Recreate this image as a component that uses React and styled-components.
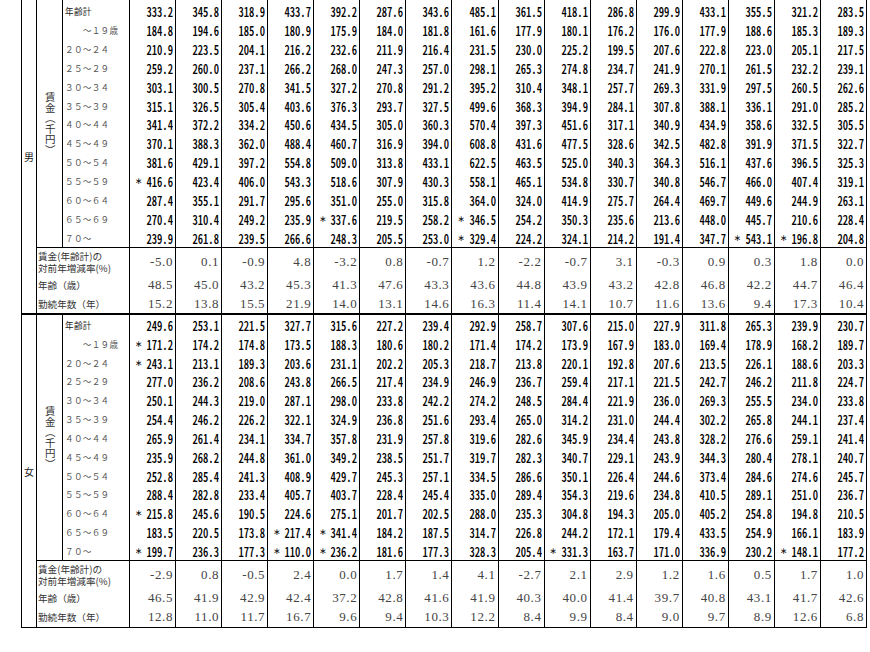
import React from 'react';
import styled, { createGlobalStyle } from 'styled-components';

const GlobalStyle = createGlobalStyle`
  html, body { margin: 0; padding: 0; background: #fff; }
  body { font-family: "Noto Sans CJK JP", sans-serif; color: #000; }
  * { box-sizing: border-box; }
`;

const Page = styled.div`
  width: 870px;
  height: 652px;
  overflow: hidden;
  padding-left: 21px;
`;

const Table = styled.div`
  width: 846px;
  border-right: 1px solid #000;
  border-bottom: 1px solid #000;
`;

const Section = styled.section`
  display: grid;
  grid-template-columns: 15px 26px 67px repeat(16, minmax(0, 1fr));
  grid-template-rows: ${(p) => (p.$stub ? '2px ' : '')}repeat(13, 18.85px) 28.5px 19px 19px;
  border-top: ${(p) => (p.$divided ? '2px solid #000' : '0')};
`;

const StubCell = styled.div`
  border-left: 1px solid #000;
  grid-column: ${(p) => p.$col || 'auto'};
`;

const SexCell = styled.div`
  grid-column: 1;
  grid-row: 1 / -1;
  border-left: 1px solid #000;
  display: flex;
  align-items: center;
  justify-content: center;
  font-size: 10px;
  color: #222;
`;

const WageHead = styled.div`
  grid-column: 2;
  grid-row: ${(p) => p.$rows};
  border-left: 1px solid #000;
  display: flex;
  align-items: center;
  justify-content: center;
`;

const VerticalText = styled.span`
  writing-mode: vertical-rl;
  font-size: 10.5px;
  line-height: 1;
  color: #333;
`;

const AgeLabel = styled.div`
  grid-column: 3;
  border-left: 1px solid #000;
  display: flex;
  align-items: center;
  padding-left: 2px;
  font-size: 8.6px;
  letter-spacing: 0.3px;
  color: ${(p) => (p.$strong ? '#222' : '#555')};
  white-space: pre;
`;

const StatLabel = styled.div`
  grid-column: 2 / 4;
  border-left: 1px solid #000;
  border-top: ${(p) => (p.$ruled ? '1px solid #000' : '0')};
  display: flex;
  align-items: center;
  padding-left: 1px;
  font-size: 9.6px;
  line-height: 12px;
  color: #333;
  white-space: pre;
`;

const WageCell = styled.div`
  border-left: 1px solid #000;
  display: flex;
  align-items: center;
  justify-content: flex-end;
  padding: 0 2px 0 5px;
  color: #000;
`;

const Star = styled.span`
  margin-right: auto;
  font-family: "DejaVu Sans", sans-serif;
  font-size: 9px;
  color: #111;
`;

const Num = styled.span`
  display: inline-block;
  margin-left: -10px;
  font-family: "Noto Sans CJK JP", sans-serif;
  font-feature-settings: "hwid" 1;
  font-size: 14px;
  font-weight: 500;
  line-height: 1;
  transform: scaleX(0.76);
  transform-origin: right center;
  white-space: nowrap;
`;

const StatCell = styled.div`
  border-left: 1px solid #000;
  border-top: ${(p) => (p.$ruled ? '1px solid #000' : '0')};
  display: flex;
  align-items: center;
  justify-content: flex-end;
  padding-right: 2px;
  font-family: "Liberation Serif", serif;
  font-size: 13px;
  letter-spacing: 0.6px;
  color: #444;
`;

const ageLabels = [
  '年齢計',
  '　　～１９歳',
  '２０～２４',
  '２５～２９',
  '３０～３４',
  '３５～３９',
  '４０～４４',
  '４５～４９',
  '５０～５４',
  '５５～５９',
  '６０～６４',
  '６５～６９',
  '７０～',
];

const male = {
  wages: [
    '333.2 345.8 318.9 433.7 392.2 287.6 343.6 485.1 361.5 418.1 286.8 299.9 433.1 355.5 321.2 283.5',
    '184.8 194.6 185.0 180.9 175.9 184.0 181.8 161.6 177.9 180.1 176.2 176.0 177.9 188.6 185.3 189.3',
    '210.9 223.5 204.1 216.2 232.6 211.9 216.4 231.5 230.0 225.2 199.5 207.6 222.8 223.0 205.1 217.5',
    '259.2 260.0 237.1 266.2 268.0 247.3 257.0 298.1 265.3 274.8 234.7 241.9 270.1 261.5 232.2 239.1',
    '303.1 300.5 270.8 341.5 327.2 270.8 291.2 395.2 310.4 348.1 257.7 269.3 331.9 297.5 260.5 262.6',
    '315.1 326.5 305.4 403.6 376.3 293.7 327.5 499.6 368.3 394.9 284.1 307.8 388.1 336.1 291.0 285.2',
    '341.4 372.2 334.2 450.6 434.5 305.0 360.3 570.4 397.3 451.6 317.1 340.9 434.9 358.6 332.5 305.5',
    '370.1 388.3 362.0 488.4 460.7 316.9 394.0 608.8 431.6 477.5 328.6 342.5 482.8 391.9 371.5 322.7',
    '381.6 429.1 397.2 554.8 509.0 313.8 433.1 622.5 463.5 525.0 340.3 364.3 516.1 437.6 396.5 325.3',
    '*416.6 423.4 406.0 543.3 518.6 307.9 430.3 558.1 465.1 534.8 330.7 340.8 546.7 466.0 407.4 319.1',
    '287.4 355.1 291.7 295.6 351.0 255.0 315.8 364.0 324.0 414.9 275.7 264.4 469.7 449.6 244.9 263.1',
    '270.4 310.4 249.2 235.9 *337.6 219.5 258.2 *346.5 254.2 350.3 235.6 213.6 448.0 445.7 210.6 228.4',
    '239.9 261.8 239.5 266.6 248.3 205.5 253.0 *329.4 224.2 324.1 214.2 191.4 347.7 *543.1 *196.8 204.8',
  ],
  rate: '-5.0 0.1 -0.9 4.8 -3.2 0.8 -0.7 1.2 -2.2 -0.7 3.1 -0.3 0.9 0.3 1.8 0.0',
  age: '48.5 45.0 43.2 45.3 41.3 47.6 43.3 43.6 44.8 43.9 43.2 42.8 46.8 42.2 44.7 46.4',
  tenure: '15.2 13.8 15.5 21.9 14.0 13.1 14.6 16.3 11.4 14.1 10.7 11.6 13.6 9.4 17.3 10.4',
};

const female = {
  wages: [
    '249.6 253.1 221.5 327.7 315.6 227.2 239.4 292.9 258.7 307.6 215.0 227.9 311.8 265.3 239.9 230.7',
    '*171.2 174.2 174.8 173.5 188.3 180.6 180.2 171.4 174.2 173.9 167.9 183.0 169.4 178.9 168.2 189.7',
    '*243.1 213.1 189.3 203.6 231.1 202.2 205.3 218.7 213.8 220.1 192.8 207.6 213.5 226.1 188.6 203.3',
    '277.0 236.2 208.6 243.8 266.5 217.4 234.9 246.9 236.7 259.4 217.1 221.5 242.7 246.2 211.8 224.7',
    '250.1 244.3 219.0 287.1 298.0 233.8 242.2 274.2 248.5 284.4 221.9 236.0 269.3 255.5 234.0 233.8',
    '254.4 246.2 226.2 322.1 324.9 236.8 251.6 293.4 265.0 314.2 231.0 244.4 302.2 265.8 244.1 237.4',
    '265.9 261.4 234.1 334.7 357.8 231.9 257.8 319.6 282.6 345.9 234.4 243.8 328.2 276.6 259.1 241.4',
    '235.9 268.2 244.8 361.0 349.2 238.5 251.7 319.7 282.3 340.7 229.1 243.9 344.3 280.4 278.1 240.7',
    '252.8 285.4 241.3 408.9 429.7 245.3 257.1 334.5 286.6 350.1 226.4 244.6 373.4 284.6 274.6 245.7',
    '288.4 282.8 233.4 405.7 403.7 228.4 245.4 335.0 289.4 354.3 219.6 234.8 410.5 289.1 251.0 236.7',
    '*215.8 245.6 190.5 224.6 275.1 201.7 202.5 288.0 235.3 304.8 194.3 205.0 405.2 254.8 194.8 210.5',
    '183.5 220.5 173.8 *217.4 *341.4 184.2 187.5 314.7 226.8 244.2 172.1 179.4 433.5 254.9 166.1 183.9',
    '*199.7 236.3 177.3 *110.0 *236.2 181.6 177.3 328.3 205.4 *331.3 163.7 171.0 336.9 230.2 *148.1 177.2',
  ],
  rate: '-2.9 0.8 -0.5 2.4 0.0 1.7 1.4 4.1 -2.7 2.1 2.9 1.2 1.6 0.5 1.7 1.0',
  age: '46.5 41.9 42.9 42.4 37.2 42.8 41.6 41.9 40.3 40.0 41.4 39.7 40.8 43.1 41.7 42.6',
  tenure: '12.8 11.0 11.7 16.7 9.6 9.4 10.3 12.2 8.4 9.9 8.4 9.0 9.7 8.9 12.6 6.8',
};

const split = (s) => s.split(' ');

function Block({ sex, data, stub, divided }) {
  return (
    <Section $stub={stub} $divided={divided}>
      <SexCell>{sex}</SexCell>
      <WageHead $rows={stub ? '1 / 15' : '1 / 14'}>
        <VerticalText>賃金（千円）</VerticalText>
      </WageHead>
      {stub && (
        <>
          <StubCell $col={3} />
          {Array.from({ length: 16 }, (_, i) => (
            <StubCell key={i} />
          ))}
        </>
      )}
      {data.wages.map((row, r) => (
        <React.Fragment key={r}>
          <AgeLabel $strong={r === 0}>{ageLabels[r]}</AgeLabel>
          {split(row).map((v, c) => {
            const star = v.startsWith('*');
            return (
              <WageCell key={c}>
                {star && <Star>∗</Star>}
                <Num>{star ? v.slice(1) : v}</Num>
              </WageCell>
            );
          })}
        </React.Fragment>
      ))}
      <StatLabel $ruled>{'賃金(年齢計)の\n対前年増減率(%)'}</StatLabel>
      {split(data.rate).map((v, c) => (
        <StatCell key={c} $ruled>{v}</StatCell>
      ))}
      <StatLabel>年齢（歳）</StatLabel>
      {split(data.age).map((v, c) => (
        <StatCell key={c}>{v}</StatCell>
      ))}
      <StatLabel>勤続年数（年）</StatLabel>
      {split(data.tenure).map((v, c) => (
        <StatCell key={c}>{v}</StatCell>
      ))}
    </Section>
  );
}

export default function App() {
  return (
    <>
      <GlobalStyle />
      <Page>
        <Table>
          <Block sex="男" data={male} stub />
          <Block sex="女" data={female} divided />
        </Table>
      </Page>
    </>
  );
}
